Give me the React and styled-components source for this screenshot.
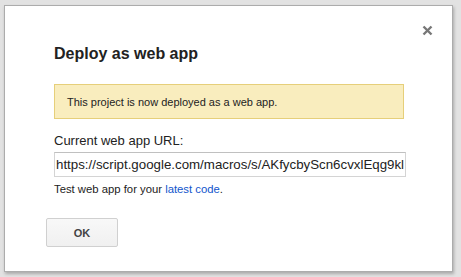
import React from 'react';
import styled, { createGlobalStyle } from 'styled-components';

const GlobalStyle = createGlobalStyle`
  html, body {
    margin: 0;
    padding: 0;
    background: #e2e2e2;
    font-family: Arial, "Liberation Sans", sans-serif;
  }
`;

const Page = styled.div`
  width: 461px;
  height: 277px;
  padding: 5px 0 0 4px;
  box-sizing: border-box;
`;

const Dialog = styled.div`
  position: relative;
  width: 449px;
  height: 267px;
  box-sizing: border-box;
  background: #fff;
  border: 1px solid #acacac;
  box-shadow: 1px 2px 3px rgba(0, 0, 0, 0.25);
  padding: 38px 47px 0 49px;
  display: flex;
  flex-direction: column;
  align-items: flex-start;
`;

const Close = styled.button`
  position: absolute;
  top: 13px;
  right: 14px;
  width: 22px;
  height: 22px;
  padding: 0;
  border: none;
  background: transparent;
  display: flex;
  align-items: center;
  justify-content: center;
  cursor: pointer;
`;

const Title = styled.h2`
  margin: 0;
  font-size: 16px;
  line-height: 20px;
  font-weight: bold;
  color: #222;
`;

const Notice = styled.div`
  margin-top: 20px;
  width: 350px;
  height: 35px;
  box-sizing: border-box;
  background: #f9edbe;
  border: 1px solid #e6cf7a;
  padding: 0 12px;
  display: flex;
  align-items: center;
  font-size: 11px;
  color: #222;
`;

const Label = styled.div`
  margin-top: 14px;
  font-size: 13px;
  line-height: 16px;
  color: #222;
`;

const UrlField = styled.input`
  margin-top: 3px;
  width: 352px;
  height: 25px;
  box-sizing: border-box;
  border: 1px solid #d4d4d4;
  border-top-color: #c0c0c0;
  padding: 0 1px;
  font-family: Arial, "Liberation Sans", sans-serif;
  font-size: 13.3px;
  color: #222;
  outline: none;
`;

const Help = styled.div`
  margin-top: 6px;
  font-size: 11.3px;
  line-height: 13px;
  color: #222;
`;

const Link = styled.a`
  color: #15c;
  text-decoration: none;
`;

const OkButton = styled.button`
  margin: 22px 0 0 -8px;
  width: 72px;
  height: 29px;
  border: 1px solid #d0d0d0;
  border-radius: 2px;
  background: linear-gradient(#f8f8f8, #f0f0f0);
  font-family: Arial, "Liberation Sans", sans-serif;
  font-size: 11px;
  font-weight: bold;
  color: #444;
  cursor: pointer;
`;

export default function App() {
  return (
    <>
      <GlobalStyle />
      <Page>
        <Dialog>
          <Close aria-label="Close">
            <svg width="11" height="11" viewBox="0 0 11 11">
              <path d="M1.5 1.5 L9.5 9.5 M9.5 1.5 L1.5 9.5" stroke="#777" strokeWidth="2.4" />
            </svg>
          </Close>
          <Title>Deploy as web app</Title>
          <Notice>This project is now deployed as a web app.</Notice>
          <Label>Current web app URL:</Label>
          <UrlField
            readOnly
            value="https://script.google.com/macros/s/AKfycbyScn6cvxlEqg9kl"
          />
          <Help>
            Test web app for your <Link href="#">latest code</Link>.
          </Help>
          <OkButton>OK</OkButton>
        </Dialog>
      </Page>
    </>
  );
}
